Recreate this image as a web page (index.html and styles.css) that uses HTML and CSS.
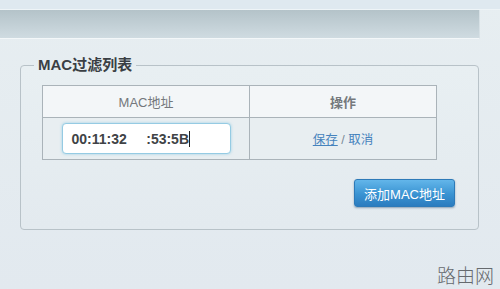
FILE: index.html
```html
<!DOCTYPE html>
<html>
<head>
<meta charset="utf-8">
<link rel="stylesheet" href="styles.css">
</head>
<body>
<div class="page">
  <div class="topstrip"></div>
  <div class="banner"></div>
  <fieldset class="panel">
    <legend class="panel-title">MAC过滤列表</legend>
    <table class="mac-table">
      <thead>
        <tr>
          <th class="col-mac">MAC地址</th>
          <th class="col-op">操作</th>
        </tr>
      </thead>
      <tbody>
        <tr>
          <td class="cell-mac"><div class="mac-input"><span class="mac-text">00:11:32     :53:5B</span><span class="caret"></span></div></td>
          <td class="cell-op"><a class="link link-save">保存</a><span class="sep"> / </span><a class="link">取消</a></td>
        </tr>
      </tbody>
    </table>
    <div class="actions">
      <button class="btn-add">添加MAC地址</button>
    </div>
  </fieldset>
  <div class="watermark">路由网</div>
</div>
</body>
</html>
```

FILE: styles.css
```css
html, body {
  margin: 0;
  padding: 0;
}
body {
  width: 500px;
  height: 289px;
  overflow: hidden;
  background: linear-gradient(#e7eef1, #e2e9ef);
  font-family: "Liberation Sans", "Noto Sans CJK SC", sans-serif;
}
.page {
  position: relative;
  width: 500px;
  height: 289px;
}
.topstrip {
  height: 9px;
  background: #dfe9f0;
  border-bottom: 1px solid #eef4f7;
}
.banner {
  width: 479px;
  height: 28px;
  background: linear-gradient(#b4c3c9, #cfdbe1);
  border-bottom: 1px solid #f3f7f9;
  border-right: 1px solid #d7e1e6;
}
.panel {
  margin: 16px 0 0 20px;
  box-sizing: border-box;
  width: 459px;
  height: 175px;
  border: 1px solid #b8c2c8;
  border-radius: 4px;
  padding: 0;
  background: linear-gradient(#e8eff2, #e3eaef);
}
.panel-title {
  margin-left: 13px;
  padding: 0 4px;
  font-size: 15px;
  line-height: 20px;
  font-weight: bold;
  color: #3a3f44;
}
.mac-table {
  margin: 10px 0 0 21px;
  width: 395px;
  border-collapse: collapse;
  font-size: 12px;
}
.mac-table th,
.mac-table td {
  border: 1px solid #aab3b9;
  padding: 0;
  text-align: center;
}
.mac-table th {
  height: 31px;
  background: #f3f6f8;
  color: #74787c;
  font-weight: normal;
  font-size: 13px;
}
.mac-table th.col-op {
  font-weight: bold;
  color: #75797d;
}
.col-mac {
  width: 206px;
}
.mac-table td {
  height: 41px;
  background: #e8eef1;
}
.mac-input {
  display: flex;
  align-items: center;
  margin: 0 auto;
  width: 169px;
  height: 31px;
  box-sizing: border-box;
  padding-left: 9px;
  background: #fff;
  border: 1px solid #95cbe3;
  border-radius: 4px;
  box-shadow: 0 0 3px rgba(110, 190, 225, 0.6);
  text-align: left;
}
.mac-text {
  white-space: pre;
  font-size: 14px;
  font-weight: bold;
  color: #404346;
}
.caret {
  display: inline-block;
  width: 1px;
  height: 16px;
  background: #222;
}
.cell-op {
  font-size: 12.5px;
  color: #6c7880;
}
.link {
  color: #4683bd;
  cursor: pointer;
}
.link-save {
  text-decoration: underline;
}
.sep {
  color: #7a8a96;
}
.actions {
  display: flex;
  justify-content: flex-end;
  padding: 19px 23px 0 0;
}
.btn-add {
  width: 101px;
  height: 28px;
  border: 1px solid #2d7ab8;
  border-radius: 3px;
  background: linear-gradient(#63b6ea, #3a93d2 55%, #2b7cbf);
  box-shadow: 0 1px 2px rgba(30, 70, 110, 0.45);
  color: #fff;
  font-family: "Liberation Sans", "Noto Sans CJK SC", sans-serif;
  font-size: 13px;
  padding: 0;
}
.watermark {
  position: absolute;
  right: 6px;
  bottom: 2px;
  font-family: "Noto Sans CJK SC", sans-serif;
  font-weight: 300;
  font-size: 19px;
  line-height: 24px;
  color: #666a6e;
}
```
